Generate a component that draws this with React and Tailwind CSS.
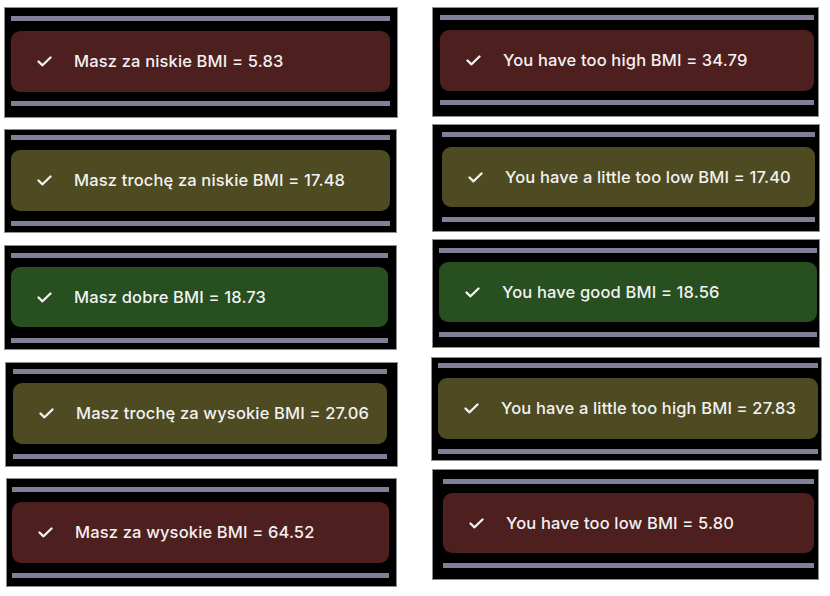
import React from "react";

const RED = "bg-[#4e1f1f]";
const OLIVE = "bg-[#4e4a22]";
const GREEN = "bg-[#274f1f]";

const left = [
  { box: "mt-[7px] ml-[4px] w-[394px] h-[111px] pt-[8px] pl-[6px] pr-[7px]", a: "mt-[10px] mb-[9px] h-[61px]", c: RED, t: "Masz za niskie BMI = 5.83" },
  { box: "mt-[11px] ml-[4px] w-[393px] h-[104px] pt-[5px] pl-[6px] pr-[6px]", a: "mt-[10px] mb-[10px] h-[61px]", c: OLIVE, t: "Masz trochę za niskie BMI = 17.48" },
  { box: "mt-[12px] ml-[4px] w-[393px] h-[105px] pt-[7px] pl-[6px] pr-[8px]", a: "mt-[9px] mb-[11px] h-[60px]", c: GREEN, t: "Masz dobre BMI = 18.73" },
  { box: "mt-[12px] ml-[5px] w-[393px] h-[105px] pt-[6px] pl-[7px] pr-[10px]", a: "mt-[9px] mb-[10px] h-[61px]", c: OLIVE, t: "Masz trochę za wysokie BMI = 27.06" },
  { box: "mt-[11px] ml-[6px] w-[391px] h-[109px] pt-[8px] pl-[5px] pr-[7px]", a: "mt-[10px] mb-[10px] h-[61px]", c: RED, t: "Masz za wysokie BMI = 64.52" },
];

const right = [
  { box: "mt-[7px] ml-[0px] w-[387px] h-[110px] pt-[7px] pl-[7px] pr-[4px]", a: "mt-[10px] mb-[9px] h-[61px]", c: RED, t: "You have too high BMI = 34.79" },
  { box: "mt-[7px] ml-[0px] w-[388px] h-[108px] pt-[7px] pl-[9px] pr-[4px]", a: "mt-[10px] mb-[10px] h-[60px]", c: OLIVE, t: "You have a little too low BMI = 17.40" },
  { box: "mt-[7px] ml-[0px] w-[388px] h-[109px] pt-[8px] pl-[6px] pr-[2px]", a: "mt-[9px] mb-[10px] h-[60px]", c: GREEN, t: "You have good BMI = 18.56" },
  { box: "mt-[9px] ml-[-1px] w-[391px] h-[104px] pt-[5px] pl-[6px] pr-[3px]", a: "mt-[10px] mb-[10px] h-[61px]", c: OLIVE, t: "You have a little too high BMI = 27.83" },
  { box: "mt-[8px] ml-[0px] w-[387px] h-[111px] pt-[9px] pl-[10px] pr-[4px]", a: "mt-[9px] mb-[10px] h-[60px]", c: RED, t: "You have too low BMI = 5.80" },
];

function Check() {
  return (
    <svg width="15" height="11" viewBox="0 0 15 11" fill="none" className="shrink-0">
      <path d="M1.5 5.5 L5.5 9.3 L13.5 1.5" stroke="#f4f4f4" strokeWidth="2.3" strokeLinecap="round" strokeLinejoin="round" />
    </svg>
  );
}

function Box({ item }) {
  return (
    <div className={`box-border flex flex-col border border-[#8d8d8d] bg-black ${item.box}`}>
      <div className="h-[5px] bg-[#7f7f98]" />
      <div className={`flex items-center rounded-[9px] pl-[26px] ${item.c} ${item.a}`}>
        <Check />
        <span className="ml-[22px] text-[16.5px] leading-none font-medium text-[#f2f2f2] font-['Inter',sans-serif] tracking-[0.15px]">
          {item.t}
        </span>
      </div>
      <div className="h-[5px] bg-[#7f7f98]" />
    </div>
  );
}

export default function App() {
  return (
    <div className="flex h-[596px] w-[830px] bg-white overflow-hidden">
      <div className="flex flex-col w-[431px]">
        {left.map((it, i) => (
          <Box key={i} item={it} />
        ))}
      </div>
      <div className="flex flex-col ml-[1px]">
        {right.map((it, i) => (
          <Box key={i} item={it} />
        ))}
      </div>
    </div>
  );
}
